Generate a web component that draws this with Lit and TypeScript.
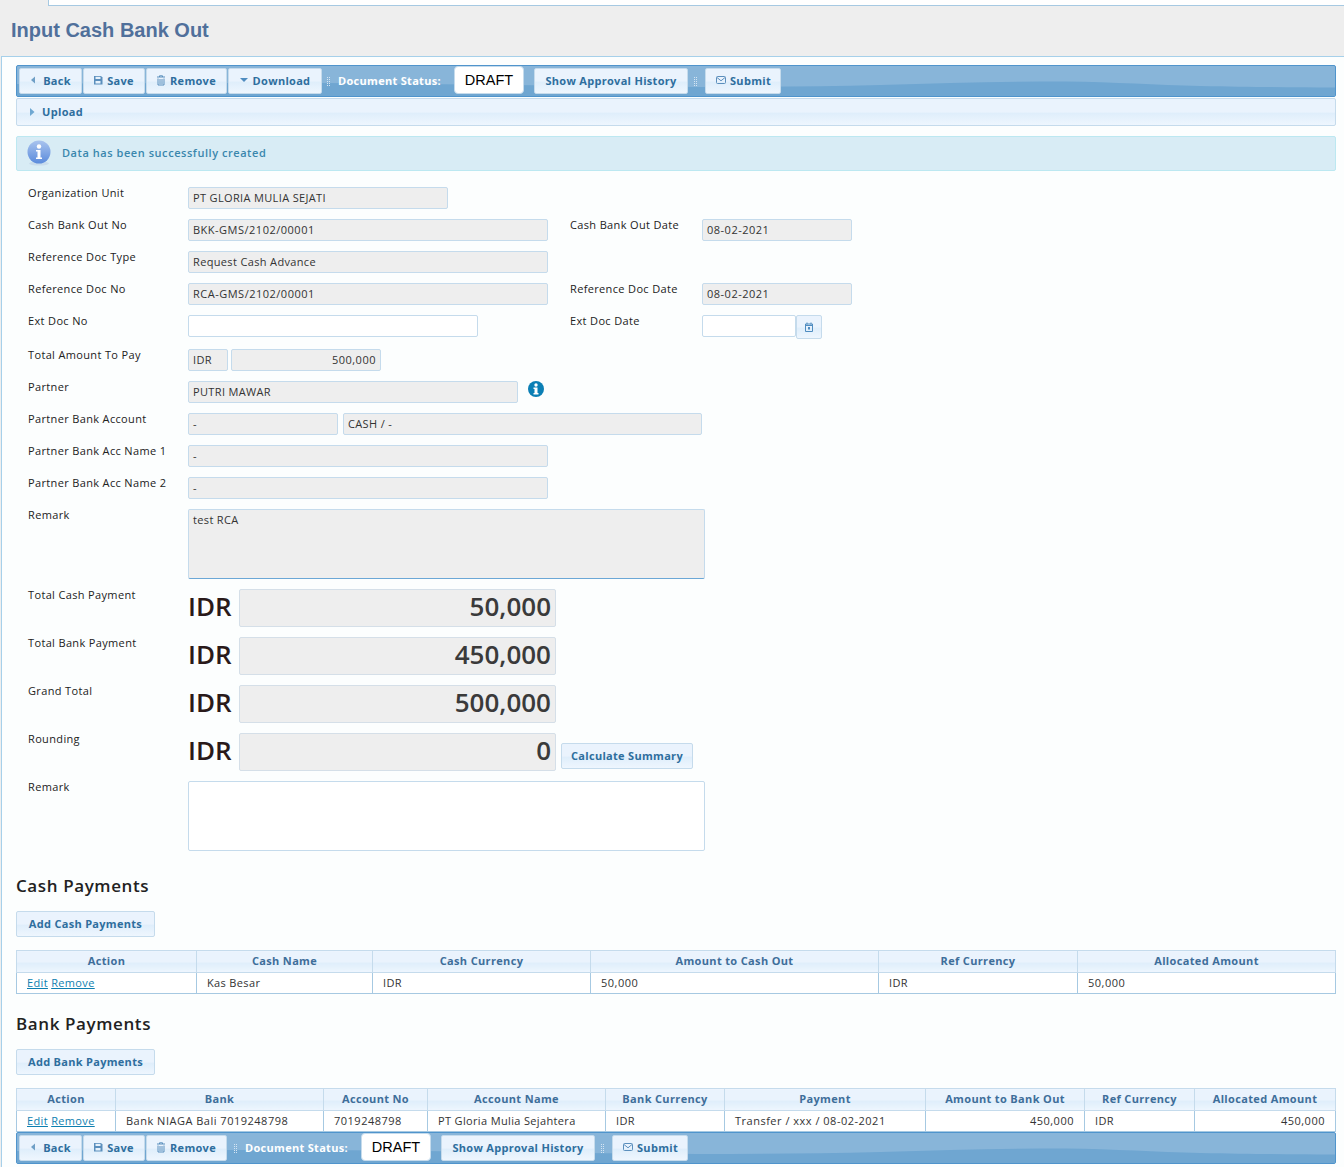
import { LitElement, html, css, svg } from "lit";
import { customElement } from "lit/decorators.js";

const icons: Record<string, any> = {
  back: svg`<path d="M7 2.500v7L3 6z" fill="#6f9fc6"/>`,
  caret: svg`<path d="M2 4h8L6 8z" fill="#4f8cc0"/>`,
  right: svg`<path d="M4 2l4.500 4L4 10z" fill="#6fa8d2"/>`,
  save: svg`<path d="M2 2h7l1.500 1.500V10.500H2z" fill="#5b8fbd"/><rect x="3.500" y="2.800" width="5" height="2.200" fill="#e6f1fb"/><rect x="3.500" y="7" width="5" height="2.500" fill="#e6f1fb"/>`,
  trash: svg`<path d="M2 3h8M4.500 3V1.800h3V3" fill="none" stroke="#5b8fbd"/><path d="M3 4.500V11h6V4.500M5 5v5M7 5v5" fill="none" stroke="#5b8fbd"/>`,
  mail: svg`<rect x="1.500" y="2.500" width="9" height="7" rx="1" fill="none" stroke="#5b8fbd"/><path d="M2 3.500L6 6.800 10 3.500" fill="none" stroke="#5b8fbd"/>`,
  cal: svg`<path d="M2.500 3h7v7.500h-7z" fill="none" stroke="#4f8cc0"/><path d="M4 1.500v2M8 1.500v2M2.500 4.500h7" stroke="#4f8cc0" fill="none"/><rect x="5" y="6" width="2" height="2.500" fill="#4f8cc0"/>`,
};
const icon = (n: string) => html`<svg class="ic" viewBox="0 0 12 12" width="12" height="12">${icons[n]}</svg>`;

const cashCols = [180, 176, 218, 288, 199, 258];
const bankCols = [99, 208, 104, 178, 119, 201, 159, 110, 141];

@customElement("app-root")
export class AppRoot extends LitElement {
  static styles = css`
    :host { display: block; height: 1167px; overflow: hidden; background: #eeeeee; position: relative;
      font-family: "Open Sans", "Noto Sans", sans-serif; font-size: 11px; color: #222; letter-spacing: .35px; }
    * { box-sizing: border-box; }
    .tab { height: 6px; margin-left: 48px; background: #fff; border: 1px solid #a6c9e2; border-top: 0; border-right: 0; }
    h1 { margin: 0; height: 50px; padding: 13px 0 0 11px; font: bold 20px/22px "Liberation Sans", sans-serif; letter-spacing: 0; color: #50709b; }
    .panel { margin-left: 1px; background: #fcfefe; border: 1px solid #a6d0ea; border-right: 0; border-bottom: 0; height: 1111px; padding: 8px 8px 0 14px; }
    .toolbar { position: relative; height: 32px; display: flex; align-items: center; padding-left: 2px; border: 1px solid #4f94cc; border-radius: 2px; background: #88b5d9; overflow: hidden; }
    .wave { position: absolute; left: 0; top: 0; width: 100%; height: 100%; }
    .toolbar > *:not(.wave) { position: relative; }
    .btn { display: inline-flex; align-items: center; justify-content: center; gap: 3px; height: 26px; padding-bottom: 2px; border: 1px solid #c5dbec; border-radius: 2px; color: #2e6e9e; font-weight: 700; font-size: 11px; letter-spacing: .3px;
      background: linear-gradient(#eaf3fd 0, #eaf3fd 50%, #dfeefb 55%, #eef6fe 100%); white-space: nowrap; flex: none; }
    .tb { margin-right: 1px; padding-right: 2px; }
    .w63 { width: 63px; } .w62 { width: 62px; } .w81 { width: 81px; } .w94 { width: 94px; margin-right: -1px; padding-right: 2px; } .w76 { width: 76px; } .w154 { width: 154px; }
    .sep { flex: none; width: 4px; height: 10px; margin: 2px 7px 0 6px; background-image: radial-gradient(circle at 0.5px 0.5px, #d5e5f3 0.6px, transparent 0.8px); background-size: 2px 2px; }
    .status { color: #fff; font-weight: 700; flex: none; width: 102px; white-space: nowrap; letter-spacing: .3px; padding-bottom: 1px; }
    .draft { flex: none; width: 70px; text-align: center; height: 28px; margin: -2px 10px 0 14px; background: #fff; border: 1px solid #c5dbec; border-radius: 4px; font: 14.500px/26px "Liberation Sans", sans-serif; letter-spacing: 0; color: #000; }
    .upload { margin-top: 1px; height: 28px; display: flex; align-items: center; gap: 4px; padding: 0 0 1px 9px; border: 1px solid #c5dbec; border-radius: 2px; color: #2e6e9e; font-weight: 700;
      background: linear-gradient(#eaf3fd 0, #eaf3fd 50%, #dfeefb 55%, #eef6fe 100%); }
    .msg { margin-top: 10px; height: 35px; display: flex; align-items: center; gap: 11px; padding: 0 0 1px 10px; background: #d8ecf5; border: 1px solid #bce8f1; border-radius: 2px; color: #3a87ad; font-weight: 600; letter-spacing: .55px; }
    .msg span { margin-top: -1px; }
    .form { margin-top: 16px; padding-left: 12px; }
    .row { display: grid; grid-template-columns: 160px 382px 132px 1fr; margin-bottom: 10px; min-height: 22px; }
    .lbl, .lbl2 { line-height: 12px; }
    .f { height: 22px; line-height: 19px; padding: 0 4px; background: #eeeeee; border: 1px solid #c5dbec; border-radius: 2px; overflow: hidden; white-space: nowrap; color: #333; flex: none; }
    .d { letter-spacing: .5px; }
    .white { background: #fff; }
    .num { text-align: right; }
    .cell { display: flex; align-items: flex-start; }
    .w260 { width: 260px; } .w360 { width: 360px; } .w290 { width: 290px; } .w150 { width: 150px; } .w40 { width: 40px; } .w330 { width: 330px; } .w359 { width: 359px; } .w94f { width: 94px; }
    .g3 { margin-left: 3px; } .g5 { margin-left: 5px; }
    .span3 { grid-column: 2 / 5; }
    .area { width: 517px; height: 70px; padding: 3px 4px; line-height: 14px; border: 1px solid #c5dbec; border-radius: 2px; background: #fff; }
    .area.ro { background: #eeeeee; border-bottom-color: #6ba7d6; color: #333; }
    .cur { width: 51px; font: 600 26px/34px "Open Sans", sans-serif; letter-spacing: 0; color: #2a1a1a; }
    .big { width: 317px; height: 38px; font: 600 26px/33px "Open Sans", sans-serif; letter-spacing: 0; text-align: right; padding: 0 4px; background: #eeeeee; border: 1px solid #d5dfe8; border-radius: 2px; color: #3a3a3a; }
    .calc { width: 132px; margin: 10px 0 0 5px; }
    .cbtn { width: 26px; height: 24px; margin-left: 0; flex: none; padding: 0; }
    .info { margin: 0 0 0 10px; flex: none; }
    h2 { margin: 0; font: 600 17px/22px "Open Sans", sans-serif; letter-spacing: .6px; color: #222; }
    .add { width: 139px; }
    table { border-collapse: collapse; table-layout: fixed; width: 1319px; }
    th { height: 22px; padding: 0 0 3px; border: 1px solid #c5dbec; color: #3e6e9a; font-weight: 700; font-size: 11px; background: linear-gradient(#eaf3fd 0, #eaf3fd 50%, #dfeefb 55%, #eef6fe 100%); }
    td { height: 21px; padding: 0 10px 1px; border: 1px solid #a6c9e2; color: #333; white-space: nowrap; background: #fff; }
    td.r, td.dg { letter-spacing: .5px; }
    a { color: #0e7fb0; text-decoration: underline; }
    .r { text-align: right; }
    .cashH { margin-top: 24px; } .cashB { margin-top: 14px; } .tbl { margin-top: 13px; }
    .bankH { margin-top: 19px; }
  `;

  private bar(download: boolean) {
    return html`<div class="toolbar">
      <svg class="wave" viewBox="0 0 1320 30" preserveAspectRatio="none"><path d="M0 18C100 17 200 17 310 17C450 18 580 21 680 21C740 21 800 20.500 865 19C930 17 990 15.500 1050 15.500C1100 16 1140 19 1185 20C1240 21 1280 21.500 1320 21.500V30H0z" fill="#6fa6d1"/></svg>
      <span class="btn tb w63">${icon("back")}Back</span>
      <span class="btn tb w62">${icon("save")}Save</span>
      <span class="btn tb w81">${icon("trash")}Remove</span>
      ${download ? html`<span class="btn w94">${icon("caret")}Download</span>` : ""}
      <span class="sep"></span>
      <span class="status">Document Status:</span>
      <span class="draft">DRAFT</span>
      <span class="btn w154">Show Approval History</span>
      <span class="sep"></span>
      <span class="btn w76">${icon("mail")}Submit</span>
    </div>`;
  }

  private row(label: string, content: any) {
    return html`<div class="row"><div class="lbl">${label}</div>${content}</div>`;
  }

  private bigRow(label: string, v: string, extra: any = "") {
    return html`<div class="row"><div class="lbl">${label}</div><div class="cell span3"><span class="cur">IDR</span><span class="big">${v}</span>${extra}</div></div>`;
  }

  private table(cols: number[], heads: string[], cells: any[], right: number[] = [], digit: number[] = []) {
    return html`<table class="tbl"><colgroup>${cols.map((w) => html`<col style="width:${w}px" />`)}</colgroup>
      <tr>${heads.map((h) => html`<th>${h}</th>`)}</tr>
      <tr>${cells.map((c, i) => html`<td class="${right.includes(i) ? "r" : ""} ${digit.includes(i) ? "dg" : ""}">${c}</td>`)}</tr></table>`;
  }

  render() {
    const act = html`<a>Edit</a> <a>Remove</a>`;
    return html`
      <div class="tab"></div>
      <h1>Input Cash Bank Out</h1>
      <div class="panel">
        ${this.bar(true)}
        <div class="upload">${icon("right")}Upload</div>
        <div class="msg">
          <svg width="24" height="26" viewBox="0 0 24 26"><defs><linearGradient id="ig" x1="0" y1="0" x2="0" y2="1"><stop offset="0" stop-color="#a9c4ee"/><stop offset="1" stop-color="#5b8bdc"/></linearGradient></defs><ellipse cx="12" cy="23.500" rx="10" ry="2" fill="#c9dcec"/><circle cx="12" cy="12" r="11.500" fill="url(#ig)"/><circle cx="12" cy="6.500" r="2.200" fill="#fff"/><path d="M9 10h4.500v7.500H15V19H9v-1.500h1.500V11.500H9z" fill="#fff"/></svg>
          <span>Data has been successfully created</span>
        </div>
        <div class="form">
          ${this.row("Organization Unit", html`<div class="f w260">PT GLORIA MULIA SEJATI</div>`)}
          ${this.row("Cash Bank Out No", html`<div class="f w360 d">BKK-GMS/2102/00001</div><div class="lbl2">Cash Bank Out Date</div><div class="f w150 d">08-02-2021</div>`)}
          ${this.row("Reference Doc Type", html`<div class="f w360">Request Cash Advance</div>`)}
          ${this.row("Reference Doc No", html`<div class="f w360 d">RCA-GMS/2102/00001</div><div class="lbl2">Reference Doc Date</div><div class="f w150 d">08-02-2021</div>`)}
          ${this.row("Ext Doc No", html`<div class="f w290 white"></div><div class="lbl2">Ext Doc Date</div><div class="cell"><div class="f w94f white"></div><span class="btn cbtn">${icon("cal")}</span></div>`)}
          ${this.row("Total Amount To Pay", html`<div class="cell"><div class="f w40">IDR</div><div class="f w150 num g3 d">500,000</div></div>`)}
          ${this.row("Partner", html`<div class="cell span3"><div class="f w330">PUTRI MAWAR</div>
            <svg class="info" width="16" height="16" viewBox="0 0 16 16"><circle cx="8" cy="8" r="8" fill="#0b7fb5"/><circle cx="8" cy="4" r="1.700" fill="#fff"/><path d="M5.500 6.500h4v5.500h1v1.500h-5V12h1V8h-1z" fill="#fff"/></svg></div>`)}
          ${this.row("Partner Bank Account", html`<div class="cell span3"><div class="f w150">-</div><div class="f w359 g5">CASH / -</div></div>`)}
          ${this.row("Partner Bank Acc Name 1", html`<div class="f w360">-</div>`)}
          ${this.row("Partner Bank Acc Name 2", html`<div class="f w360">-</div>`)}
          ${this.row("Remark", html`<div class="area ro span3">test RCA</div>`)}
          ${this.bigRow("Total Cash Payment", "50,000")}
          ${this.bigRow("Total Bank Payment", "450,000")}
          ${this.bigRow("Grand Total", "500,000")}
          ${this.bigRow("Rounding", "0", html`<span class="btn calc">Calculate Summary</span>`)}
          ${this.row("Remark", html`<div class="area span3"></div>`)}
        </div>
        <h2 class="cashH">Cash Payments</h2>
        <div class="cashB"><span class="btn add">Add Cash Payments</span></div>
        ${this.table(cashCols, ["Action", "Cash Name", "Cash Currency", "Amount to Cash Out", "Ref Currency", "Allocated Amount"], [act, "Kas Besar", "IDR", "50,000", "IDR", "50,000"], [], [3, 5])}
        <h2 class="bankH">Bank Payments</h2>
        <div class="cashB"><span class="btn add">Add Bank Payments</span></div>
        ${this.table(bankCols, ["Action", "Bank", "Account No", "Account Name", "Bank Currency", "Payment", "Amount to Bank Out", "Ref Currency", "Allocated Amount"], [act, "Bank NIAGA Bali 7019248798", "7019248798", "PT Gloria Mulia Sejahtera", "IDR", "Transfer / xxx / 08-02-2021", "450,000", "IDR", "450,000"], [6, 8], [1, 2, 5])}
        ${this.bar(false)}
      </div>
    `;
  }
}
